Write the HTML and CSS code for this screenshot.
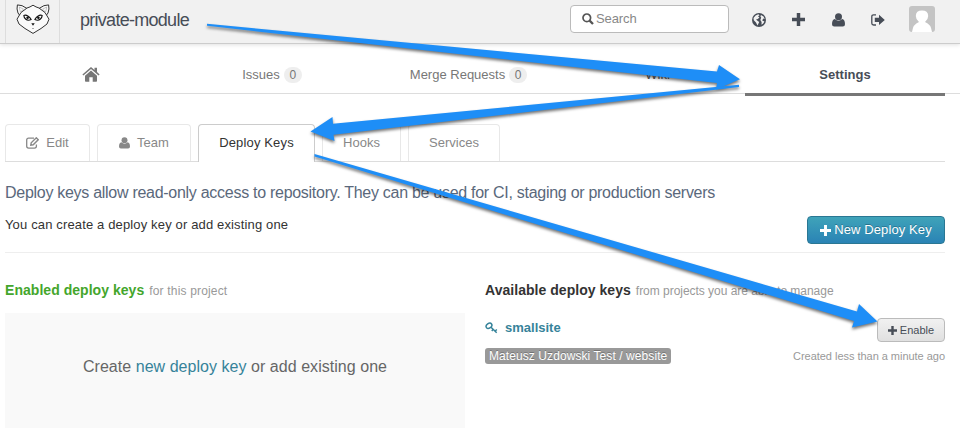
FILE: index.html
```html
<!DOCTYPE html>
<html lang="en">
<head>
<meta charset="utf-8">
<title>private-module</title>
<link rel="stylesheet" href="styles.css">
</head>
<body>
<svg class="symbols" width="0" height="0">
  <symbol id="plus" viewBox="0 0 12 12"><path d="M4.4 0h3.2v4.4H12v3.2H7.6V12H4.4V7.6H0V4.4h4.4z"/></symbol>
  <symbol id="user" viewBox="0 0 13 14"><circle cx="6.5" cy="3.7" r="3.5"/><path d="M2.8 6.1Q6.5 9.4 10.2 6.1Q12.9 6.7 13 11.2Q13 13.6 10.8 13.6H2.2Q0 13.6 0 11.2Q.1 6.7 2.8 6.1z"/></symbol>
</svg>
<header class="topbar">
  <a class="logo">
    <svg width="34" height="30" viewBox="0 0 34 30" stroke="#333" stroke-width="1" stroke-linejoin="round">
      <path d="M1.4.9Q.4 5 2 9L3.5 11L11 4.5Q6 .7 1.4.9zM32.6.9Q33.6 5 32 9L30.5 11L23 4.5Q28 .7 32.6.9z"/>
      <path d="M3.4 3Q3.6 6 4.5 8L7.5 5.2zM30.6 3Q30.4 6 29.5 8L26.5 5.2z" stroke-width=".4" stroke="#777"/>
      <path d="M11 4L14 2.9L17 1.2L20 2.9L23 4L29 8.5L33 15.2L31 20L25 24.5L17 29.4L9 24.5L3 20L1 15.2L5 8.5z"/>
      <path d="M7.8 11.4Q11.5 10.2 15.2 15.5Q12 17 9.8 15.3Q8 14 7.8 11.4zM26.2 11.4Q22.5 10.2 18.8 15.5Q22 17 24.2 15.3Q26 14 26.2 11.4z" fill="#fff" stroke="#111" stroke-width="1.1"/>
      <g stroke="none"><circle cx="11.6" cy="13.7" r="1.3" fill="#111"/><circle cx="22.4" cy="13.7" r="1.3" fill="#111"/><path d="M15.3 19.2h3.4L17 21.8z" fill="#111"/><path d="M16 24h2v1h-2z" fill="#aaa"/></g>
    </svg>
  </a>
  <h1 class="project">private-module</h1>
  <div class="search">
    <svg width="12" height="12" viewBox="0 0 12 12" fill="none" stroke="#555" stroke-width="1.7"><circle cx="4.8" cy="4.8" r="3.8"/><path d="M7.6 7.6L11 11" stroke-width="2.3"/></svg>
    <span>Search</span>
  </div>
  <nav class="tools">
    <svg width="14" height="14" viewBox="0 0 14 14"><circle cx="7" cy="7" r="7" fill="#474d57"/><path d="M1.5 5Q3.3 2 6.3 1.3L7.6 2.2L6 3.3L7.4 4.4L5.8 6L4 6.4L5.8 8L7.2 9L5.5 12.6L4 9.5L1.8 7.3zM9 2L11.5 3.5L12.7 6L11.3 5.4L10.2 7.4L12.4 8.4Q11.5 10.8 9.5 11.8L9.6 9L8.3 7L9.2 4.8L8.4 3.3z" fill="#f1f1f1"/></svg>
    <svg width="13" height="13"><use href="#plus"/></svg>
    <svg width="13" height="14"><use href="#user"/></svg>
    <svg width="14" height="12" viewBox="0 0 14 12"><path d="M5 .8H2.6Q.8.8.8 2.6V9.2Q.8 11 2.6 11H5" fill="none" stroke="#474d57" stroke-width="1.3"/><path d="M3.8 3.8H8V.7L13.8 5.9L8 11.1V8H3.8z"/></svg>
  </nav>
  <svg class="avatar" width="26" height="26" viewBox="0 0 26 26"><rect width="26" height="26" rx="3" fill="#c4c4c4"/><path d="M3 26Q4 18 10 16Q6.8 13.5 6.8 10Q7 4.6 13 4.6Q19 4.6 19.2 10Q19.2 13.5 16 16Q22 18 23 26z" fill="#fff"/></svg>
</header>
<nav class="mainnav">
  <a class="home"><svg width="18" height="15" viewBox="0 0 18 15"><path d="M9 0L12.5 3V.8H15V5L17.6 7.4L16.6 8.5L9 2L1.4 8.5L.4 7.4zM9 3.6L15 8.8V14Q15 14.8 14.2 14.8H10.7V10.3H7.3V14.8H3.8Q3 14.8 3 14V8.8z"/></svg></a>
  <a class="issues"><span>Issues</span><b>0</b></a>
  <a class="merge"><span>Merge Requests</span><b>0</b></a>
  <a class="wiki"><span>Wiki</span></a>
  <a class="settings"><span>Settings</span></a>
</nav>
<main class="content">
  <nav class="tabs">
    <a class="edit"><svg width="13" height="12" viewBox="0 0 13 12" fill="none" stroke="#888"><path d="M8 1.2H2.6Q.7 1.2.7 3V9.3Q.7 11.1 2.6 11.1H8.5Q10.4 11.1 10.4 9.3V7.5" stroke-width="1.3"/><path d="M4.8 8.2L5.2 5.8L10.3.8L12.2 2.7L7.2 7.8z" stroke-width="1.4"/></svg><span>Edit</span></a>
    <a class="team"><svg width="11" height="12"><use href="#user"/></svg><span>Team</span></a>
    <a class="keys active"><span>Deploy Keys</span></a>
    <a class="hooks"><span>Hooks</span></a>
    <a class="services"><span>Services</span></a>
  </nav>
  <p class="lead"><span>Deploy keys allow read-only access to repository. They can be used for CI, staging or production servers</span></p>
  <div class="intro">
    <p>You can create a deploy key or add existing one</p>
    <a class="btn primary"><svg width="11" height="11"><use href="#plus"/></svg><span>New Deploy Key</span></a>
  </div>
  <div class="columns">
    <section>
      <h2 class="green"><span>Enabled deploy keys</span><small class="s1">for this project</small></h2>
      <div class="empty"><p>Create <a>new deploy key</a> or add existing one</p></div>
    </section>
    <section>
      <h2><span>Available deploy keys</span><small class="s2">from projects you are able to manage</small></h2>
      <div class="key">
        <div class="info">
          <a class="name"><svg width="13" height="12" viewBox="0 0 13 12" fill="none" stroke="#36839a" stroke-width="1.5"><ellipse cx="4" cy="3.8" rx="3.1" ry="2.3" transform="rotate(-35 4 3.8)"/><path d="M6 5.2L11.7 10.8M8 7.4L6.8 9M10 9.2L11.8 7.5"/></svg><strong>smallsite</strong></a>
          <span class="label">Mateusz Uzdowski Test / website</span>
        </div>
        <div class="actions">
          <a class="btn small"><svg width="9" height="9"><use href="#plus"/></svg><span>Enable</span></a>
          <span class="created">Created less than a minute ago</span>
        </div>
      </div>
    </section>
  </div>
</main>
<svg class="arrows" width="960" height="439" viewBox="0 0 960 439">
  <path d="M207 23.8L717 71.5L719 65L740 79.3L716 89.5L717 83L207 25.8z"/>
  <path d="M739 84.7L333 123.8L332.5 117L310.5 131.5L334.5 141L333.5 134.7L739 87z"/>
  <path d="M314.5 154L857 311.5L859 304L877.5 321.5L852 327.5L854 321L314.5 156.5z"/>
</svg>
</body>
</html>
```
FILE: styles.css
```css
* { box-sizing: border-box; }
body { margin: 0; width: 960px; height: 439px; overflow: hidden; background: #fff; color: #333; font: 13px/20px "Liberation Sans", Arial, sans-serif; }
h1, h2, p { margin: 0; font-weight: normal; }
svg { flex: none; display: block; fill: currentColor; }
svg[fill="none"] { fill: none; }
span, small, p { white-space: nowrap; }
.symbols, .arrows { position: absolute; top: 0; left: 0; }
.arrows { pointer-events: none; fill: #1e8ef7; filter: drop-shadow(0 2px 1.5px rgba(0, 0, 0, .55)); }

.topbar { display: flex; height: 44px; padding-left: 5px; background: #f1f1f1; border-bottom: 1px solid #ccc; box-shadow: 0 1px 4px rgba(0, 0, 0, .12); color: #474d57; }
.logo { width: 55px; height: 43px; padding: 4px 0 0 10px; border-left: 1px solid #ddd; border-right: 1px solid #ddd; }
.logo svg { fill: #fafafa; }
.project { width: 490px; margin-left: 20px; font-size: 18px; line-height: 40px; letter-spacing: -.72px; }
.search { display: flex; align-items: center; gap: 2px; width: 159px; height: 28px; margin-top: 5px; padding-left: 11px; border: 1px solid #bbb; border-radius: 4px; background: #fff; color: #888; letter-spacing: -.1px; }
.search svg { margin-bottom: 1px; }
.tools { display: flex; align-items: center; gap: 26px; height: 39px; margin-left: 23px; }
.tools svg:nth-child(3) { margin-left: 1px; }
.avatar { margin: 6px 0 0 24px; }

.mainnav { display: flex; height: 50px; padding: 0 15px 0 5px; border-bottom: 1px solid #ddd; color: #777; }
.mainnav a { display: flex; justify-content: center; align-items: center; gap: 4px; height: 52px; padding-bottom: 11px; padding-top: 20px; }
.mainnav b { width: 18px; height: 16px; border-radius: 8px; background: #eee; text-align: center; font: 12px/16px "Liberation Sans", sans-serif; }
.home { width: 172px; }
.issues { width: 190px; }
.merge { width: 203px; }
.wiki { width: 175px; color: #555; }
.mainnav .settings { width: 200px; padding-bottom: 8px; border-bottom: 3px solid #777; color: #474d57; font-weight: bold; }

.content { padding: 30px 15px 0 5px; }
.tabs { display: flex; gap: 7px; height: 38px; border-bottom: 1px solid #ddd; color: #888; }
.tabs a { display: flex; justify-content: center; align-items: center; gap: 7px; height: 37px; border: 1px solid #e8e8e8; border-bottom: 0; border-radius: 4px 4px 0 0; }
.tabs .active { height: 38px; padding-bottom: 1px; border-color: #ccc; background: #fff; color: #333; letter-spacing: .15px; }
.edit { width: 85px; }
.team { width: 94px; }
.keys { width: 117px; }
.hooks { width: 79px; }
.services { width: 92px; }
.lead { height: 54px; padding-top: 20px; font-size: 16px; line-height: 22px; color: #5a687b; letter-spacing: -.282px; }
.intro { display: flex; justify-content: space-between; height: 37px; border-bottom: 1px solid #eee; }
.intro p { line-height: 18px; letter-spacing: .145px; }
.btn { display: flex; align-items: center; justify-content: center; border: 1px solid #bbb; border-radius: 4px; }
.primary { width: 138px; height: 28px; gap: 3px; border-color: #2a7793; background: linear-gradient(#3fa3b9, #2a83b5); color: #fff; letter-spacing: .1px; text-shadow: 0 -1px 0 rgba(0, 0, 0, .25); }
.small { width: 68px; height: 24px; gap: 3px; background: linear-gradient(#f1f1f1, #e0e0e0); color: #474d57; font-size: 11px; }
.columns { display: flex; gap: 20px; padding-top: 27px; }
.columns section { width: 460px; }
h2 { display: flex; gap: 5px; align-items: baseline; height: 33px; color: #333; font-size: 14px; font-weight: bold; letter-spacing: .04px; }
.green { color: #44a62c; }
h2 small { color: #999; font-size: 12px; font-weight: normal; }
.s1 { letter-spacing: .17px; }
.s2 { letter-spacing: -.03px; }
.empty { display: flex; justify-content: center; height: 115px; padding-top: 44px; background: #f9f9f9; color: #666; font-size: 16px; letter-spacing: .04px; }
.empty a, .name { color: #36839a; }
.key { display: flex; justify-content: space-between; padding-top: 5px; }
.name { display: flex; gap: 7px; align-items: center; height: 20px; margin-bottom: 10px; }
.label { display: block; width: 186px; height: 16px; padding-left: 4px; border-radius: 3px; background: #999; color: #fff; font-size: 12px; line-height: 16px; letter-spacing: .08px; text-shadow: 0 -1px 0 rgba(0, 0, 0, .25); }
.actions { display: flex; flex-direction: column; align-items: flex-end; }
.created { margin-top: 4px; color: #999; font-size: 11px; letter-spacing: -.03px; }
```
